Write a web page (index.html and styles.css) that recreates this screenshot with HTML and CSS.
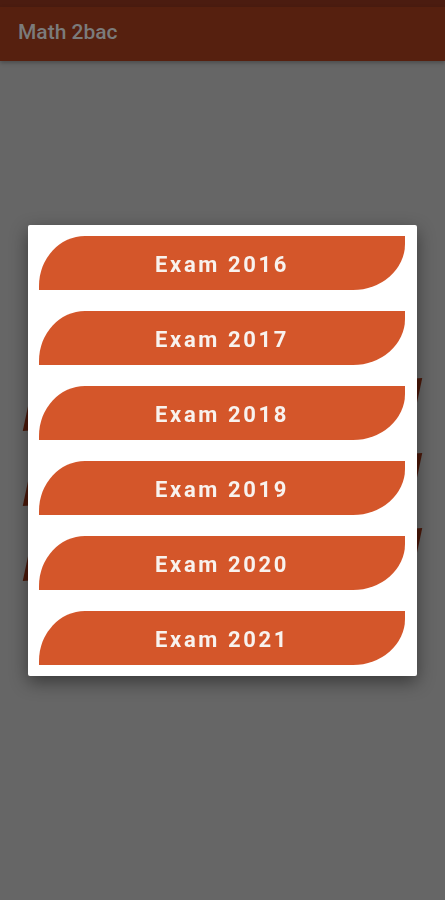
FILE: index.html
```html
<!DOCTYPE html>
<html lang="en">
<head>
    <meta charset="UTF-8">
    <meta name="viewport" content="width=device-width, initial-scale=1.0">
    <title>Math 2bac</title>
    <link rel="stylesheet" href="styles.css">
</head>
<body>
    <div class="screen">
        <!-- Status strip + toolbar -->
        <div class="status"></div>
        <header class="toolbar">
            <span class="title">Math 2bac</span>
        </header>

        <!-- Main menu (dimmed behind the dialog) -->
        <main class="menu">
            <div class="menu-item"></div>
            <div class="menu-item"></div>
            <div class="menu-item"></div>
        </main>
    </div>

    <!-- Exam picker dialog -->
    <div class="overlay">
        <div class="dialog">
            <button class="exam-btn">Exam 2016</button>
            <button class="exam-btn">Exam 2017</button>
            <button class="exam-btn">Exam 2018</button>
            <button class="exam-btn">Exam 2019</button>
            <button class="exam-btn">Exam 2020</button>
            <button class="exam-btn">Exam 2021</button>
        </div>
    </div>
</body>
</html>
```

FILE: styles.css
```css
body {
    font-family: Roboto, "Noto Sans", Arial, sans-serif;
    margin: 0;
    padding: 0;
    background-color: #666666;
    height: 900px;
    overflow: hidden;
}

.screen {
    display: flex;
    flex-direction: column;
}

.status {
    height: 7px;
    background-color: #4b1c10;
}

.toolbar {
    height: 54px;
    background-color: #56200f;
    display: flex;
    align-items: center;
    padding: 0 18px;
    box-shadow: 0 2px 4px rgba(0, 0, 0, 0.25);
}

.title {
    color: #7b7b7b;
    font-size: 21px;
    font-weight: 500;
    margin-top: -4px;
}

.menu {
    display: flex;
    flex-direction: column;
    gap: 50px;
    padding-top: 331px;
}

.menu-item {
    height: 25px;
    width: 395px;
    margin: 0 auto;
    background-color: #4c1809;
    transform: rotate(-4deg) skewX(-16deg);
}

.overlay {
    position: fixed;
    inset: 0;
    display: flex;
    justify-content: center;
    align-items: center;
}

.dialog {
    background: white;
    width: 366px;
    padding: 11px 12px 11px 11px;
    border-radius: 2px;
    box-shadow: 0 6px 18px rgba(0, 0, 0, 0.45);
    display: flex;
    flex-direction: column;
    gap: 21px;
}

.exam-btn {
    height: 54px;
    width: 100%;
    border: none;
    background-color: #d4562a;
    color: #f8f2ee;
    font-family: Roboto, Arial, sans-serif;
    font-size: 22px;
    font-weight: 700;
    letter-spacing: 2.6px;
    border-radius: 46px 0 52px 0 / 50px 0 46px 0;
    padding: 4px 0 0 0;
    cursor: pointer;
}
```
